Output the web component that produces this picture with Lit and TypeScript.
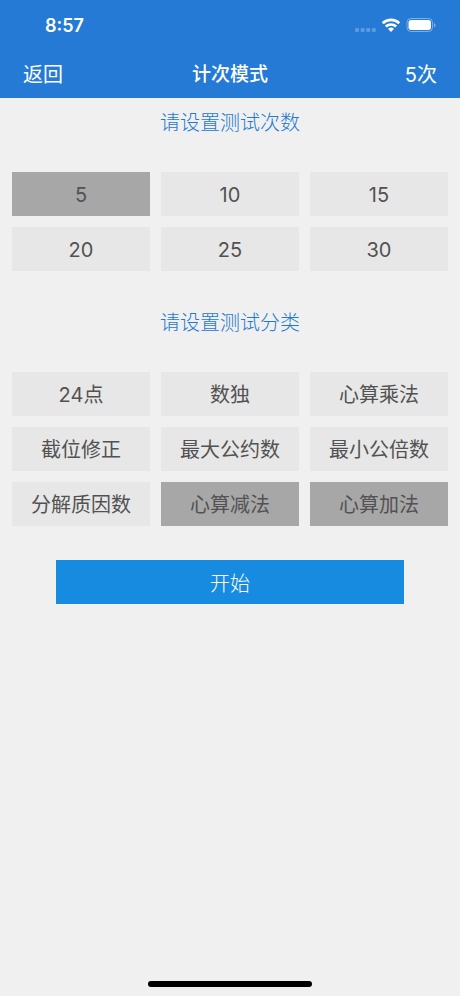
import { LitElement, html, css } from "lit";
import { customElement, property, state } from "lit/decorators.js";

@customElement("status-bar")
class StatusBar extends LitElement {
  static styles = css`
    :host {
      display: flex;
      align-items: center;
      justify-content: space-between;
      height: 50px;
      padding: 0 24px 0 45px;
      color: #fff;
    }
    .time {
      padding-top: 2px;
      font-size: 18px;
      font-weight: 600;
      line-height: 24px;
    }
    .indicators {
      display: flex;
      align-items: center;
    }
  `;

  render() {
    return html`
      <span class="time">8:57</span>
      <span class="indicators">
        <svg width="81" height="16" viewBox="0 0 81 16" aria-hidden="true">
          <g fill="#fff" fill-opacity="0.25">
            <rect x="0" y="11" width="4" height="4" rx="1.200" />
            <rect x="5.600" y="11" width="4" height="4" rx="1.200" />
            <rect x="11.200" y="11" width="4" height="4" rx="1.200" />
            <rect x="16.800" y="11" width="4" height="4" rx="1.200" />
          </g>
          <g fill="none" stroke="#fff" stroke-width="2.700">
            <path d="M27.700 6.200a12.200 12.200 0 0 1 16.600 0" />
            <path d="M30.800 9.500a7.700 7.700 0 0 1 10.400 0" />
          </g>
          <path d="M33 11.700a4.600 4.600 0 0 1 6 0L36 14.900z" fill="#fff" />
          <rect x="52" y="1.500" width="25.500" height="13" rx="4" fill="none" stroke="#fff" stroke-opacity="0.400" />
          <rect x="53.500" y="3" width="22.500" height="10" rx="2.700" fill="#fff" />
          <path d="M79 6v4.500c1-.4 1.600-1.300 1.600-2.250S80 6.400 79 6z" fill="#fff" fill-opacity="0.400" />
        </svg>
      </span>
    `;
  }
}

@customElement("option-grid")
class OptionGrid extends LitElement {
  @property() label = "";
  @property({ type: Array }) options: string[] = [];
  @property({ type: Array }) selected: string[] = [];

  static styles = css`
    :host {
      display: block;
    }
    .title {
      margin: 0;
      padding: 9px 0 7px;
      color: #1f78d1;
      font-size: 20px;
      font-weight: 300;
      line-height: 32px;
      text-align: center;
    }
    .grid {
      display: grid;
      grid-template-columns: repeat(3, minmax(0, 1fr));
      gap: 11px;
      padding: 26px 12px 27px;
    }
    .option {
      height: 44px;
      padding: 2px 0 0;
      border: 0;
      border-radius: 0;
      background: #e7e7e7;
      color: #525252;
      font-family: inherit;
      font-size: 20px;
      font-weight: 390;
      line-height: 24px;
      cursor: pointer;
    }
    .option[aria-pressed="true"] {
      background: #a7a7a7;
    }
  `;

  private pick(option: string) {
    this.dispatchEvent(new CustomEvent("pick", { detail: option }));
  }

  render() {
    return html`
      <h2 class="title" id="title">${this.label}</h2>
      <div class="grid" role="group" aria-labelledby="title">
        ${this.options.map(
          (option) => html`
            <button
              class="option"
              type="button"
              aria-pressed=${this.selected.includes(option) ? "true" : "false"}
              @click=${() => this.pick(option)}
            >${option}</button>
          `
        )}
      </div>
    `;
  }
}

@customElement("app-root")
class AppRoot extends LitElement {
  @state() private count = "5";
  @state() private categories = ["心算减法", "心算加法"];

  private counts = ["5", "10", "15", "20", "25", "30"];
  private kinds = [
    "24点", "数独", "心算乘法",
    "截位修正", "最大公约数", "最小公倍数",
    "分解质因数", "心算减法", "心算加法",
  ];

  static styles = css`
    :host {
      display: flex;
      flex-direction: column;
      box-sizing: border-box;
      min-height: 100vh;
      background: #f0f0f0;
      font-family: Inter, "Noto Sans CJK SC", sans-serif;
    }
    .header {
      background: #247ad4;
      color: #fff;
    }
    .nav {
      display: grid;
      grid-template-columns: 1fr auto 1fr;
      align-items: center;
      box-sizing: border-box;
      height: 48px;
      padding: 1px 23px 0;
    }
    .back {
      justify-self: start;
      padding: 0;
      border: 0;
      background: none;
      color: inherit;
      font-family: inherit;
      font-size: 20px;
      font-weight: 390;
      line-height: 24px;
      cursor: pointer;
    }
    .heading {
      margin: 0;
      font-size: 19px;
      font-weight: 500;
      line-height: 24px;
    }
    .count {
      justify-self: end;
      font-size: 20px;
      font-weight: 390;
      line-height: 24px;
    }
    .content {
      display: flex;
      flex-direction: column;
      flex: 1;
    }
    .start {
      height: 44px;
      margin: 7px 56px 24px;
      padding: 4px 0 0;
      border: 0;
      background: #178bdf;
      color: #fff;
      font-family: inherit;
      font-size: 20px;
      font-weight: 300;
      line-height: 24px;
      cursor: pointer;
    }
    .home {
      align-self: center;
      width: 164px;
      height: 6px;
      margin-bottom: 9px;
      border-radius: 3px;
      background: #000;
    }
  `;

  private toggle(kind: string) {
    this.categories = this.categories.includes(kind)
      ? this.categories.filter((item) => item !== kind)
      : [...this.categories, kind];
  }

  render() {
    return html`
      <header class="header">
        <status-bar></status-bar>
        <nav class="nav">
          <button class="back" type="button">返回</button>
          <h1 class="heading">计次模式</h1>
          <span class="count">${this.count}次</span>
        </nav>
      </header>
      <main class="content">
        <option-grid
          label="请设置测试次数"
          .options=${this.counts}
          .selected=${[this.count]}
          @pick=${(event: CustomEvent<string>) => (this.count = event.detail)}
        ></option-grid>
        <option-grid
          label="请设置测试分类"
          .options=${this.kinds}
          .selected=${this.categories}
          @pick=${(event: CustomEvent<string>) => this.toggle(event.detail)}
        ></option-grid>
        <button class="start" type="button">开始</button>
      </main>
      <div class="home"></div>
    `;
  }
}
